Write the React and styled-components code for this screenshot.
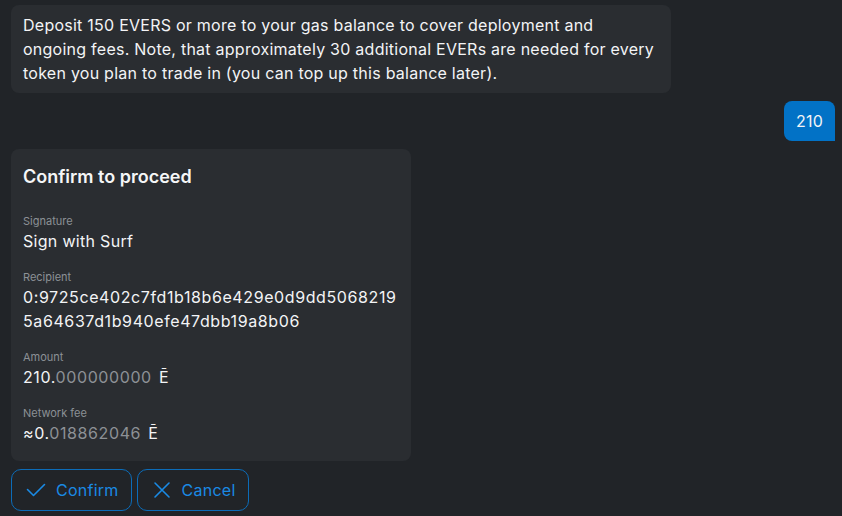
import React from "react";
import styled, { createGlobalStyle } from "styled-components";

const Global = createGlobalStyle`
  html, body { margin: 0; padding: 0; background: #212428; }
  body { font-family: Inter, "Noto Sans", sans-serif; color: #f1f3f5; -webkit-font-smoothing: antialiased; }
`;

const Feed = styled.div`
  display: flex;
  flex-direction: column;
  gap: 8px;
  padding: 5px 7px 0 11px;
`;

const Bubble = styled.div`
  box-sizing: border-box;
  align-self: ${(p) => (p.$mine ? "flex-end" : "flex-start")};
  max-width: 660px;
  padding: 8px 12px;
  font-size: 16px;
  line-height: 24px;
  letter-spacing: 0.25px;
  border-radius: ${(p) => (p.$mine ? "8px 8px 0 8px" : "8px")};
  background: ${(p) => (p.$mine ? "#0272c6" : "#2a2d31")};
  color: #f3f4f6;
`;

const Card = styled.div`
  box-sizing: border-box;
  width: 400px;
  padding: 16px 12px;
  background: #2a2d31;
  border-radius: 8px;
  display: flex;
  flex-direction: column;
`;

const Title = styled.div`
  font-size: 18px;
  line-height: 24px;
  font-weight: 600;
  color: #f5f6f7;
  margin-bottom: 24px;
`;

const Field = styled.div`
  display: flex;
  flex-direction: column;
  & + & { margin-top: 16px; }
`;

const Label = styled.div`
  font-size: 11px;
  line-height: 16px;
  color: #8c9196;
`;

const Value = styled.div`
  font-size: 16px;
  line-height: 24px;
  letter-spacing: ${(p) => (p.$num ? "0.6px" : "0.3px")};
  color: #f3f4f6;
  word-break: break-all;
`;

const Dim = styled.span`
  color: #8d9196;
`;

const Unit = styled.span`
  margin-left: 2px;
`;

const Actions = styled.div`
  display: flex;
  gap: 5px;
`;

const Button = styled.button`
  display: flex;
  align-items: center;
  gap: 8px;
  height: 42px;
  padding: 0 12px;
  background: transparent;
  border: 1px solid #0c6cb8;
  border-radius: 10px;
  color: #1a8ae4;
  font-family: Inter, sans-serif;
  font-size: 16px;
  line-height: 24px;
  letter-spacing: 0.25px;
  cursor: pointer;
  svg { width: 24px; height: 24px; flex: none; }
`;

const CheckIcon = () => (
  <svg viewBox="0 0 24 24" fill="none" stroke="currentColor" strokeWidth="1.6" strokeLinecap="round" strokeLinejoin="round">
    <path d="M20.5 6.5 9.5 17.5 3.5 11.5" />
  </svg>
);

const XIcon = () => (
  <svg viewBox="0 0 24 24" fill="none" stroke="currentColor" strokeWidth="1.6" strokeLinecap="round" strokeLinejoin="round">
    <path d="M19 5 5 19M5 5l14 14" />
  </svg>
);

export default function App() {
  return (
    <>
      <Global />
      <Feed>
        <Bubble>
          Deposit 150 EVERS or more to your gas balance to cover deployment and ongoing fees. Note, that approximately 30 additional EVERs are needed for every token you plan to trade in (you can top up this balance later).
        </Bubble>
        <Bubble $mine>210</Bubble>
        <Card>
          <Title>Confirm to proceed</Title>
          <Field>
            <Label>Signature</Label>
            <Value>Sign with Surf</Value>
          </Field>
          <Field>
            <Label>Recipient</Label>
            <Value $num>0:9725ce402c7fd1b18b6e429e0d9dd50682195a64637d1b940efe47dbb19a8b06</Value>
          </Field>
          <Field>
            <Label>Amount</Label>
            <Value $num>210.<Dim>000000000</Dim><Unit> Ē</Unit></Value>
          </Field>
          <Field>
            <Label>Network fee</Label>
            <Value $num>≈0.<Dim>018862046</Dim><Unit> Ē</Unit></Value>
          </Field>
        </Card>
        <Actions>
          <Button><CheckIcon />Confirm</Button>
          <Button><XIcon />Cancel</Button>
        </Actions>
      </Feed>
    </>
  );
}
